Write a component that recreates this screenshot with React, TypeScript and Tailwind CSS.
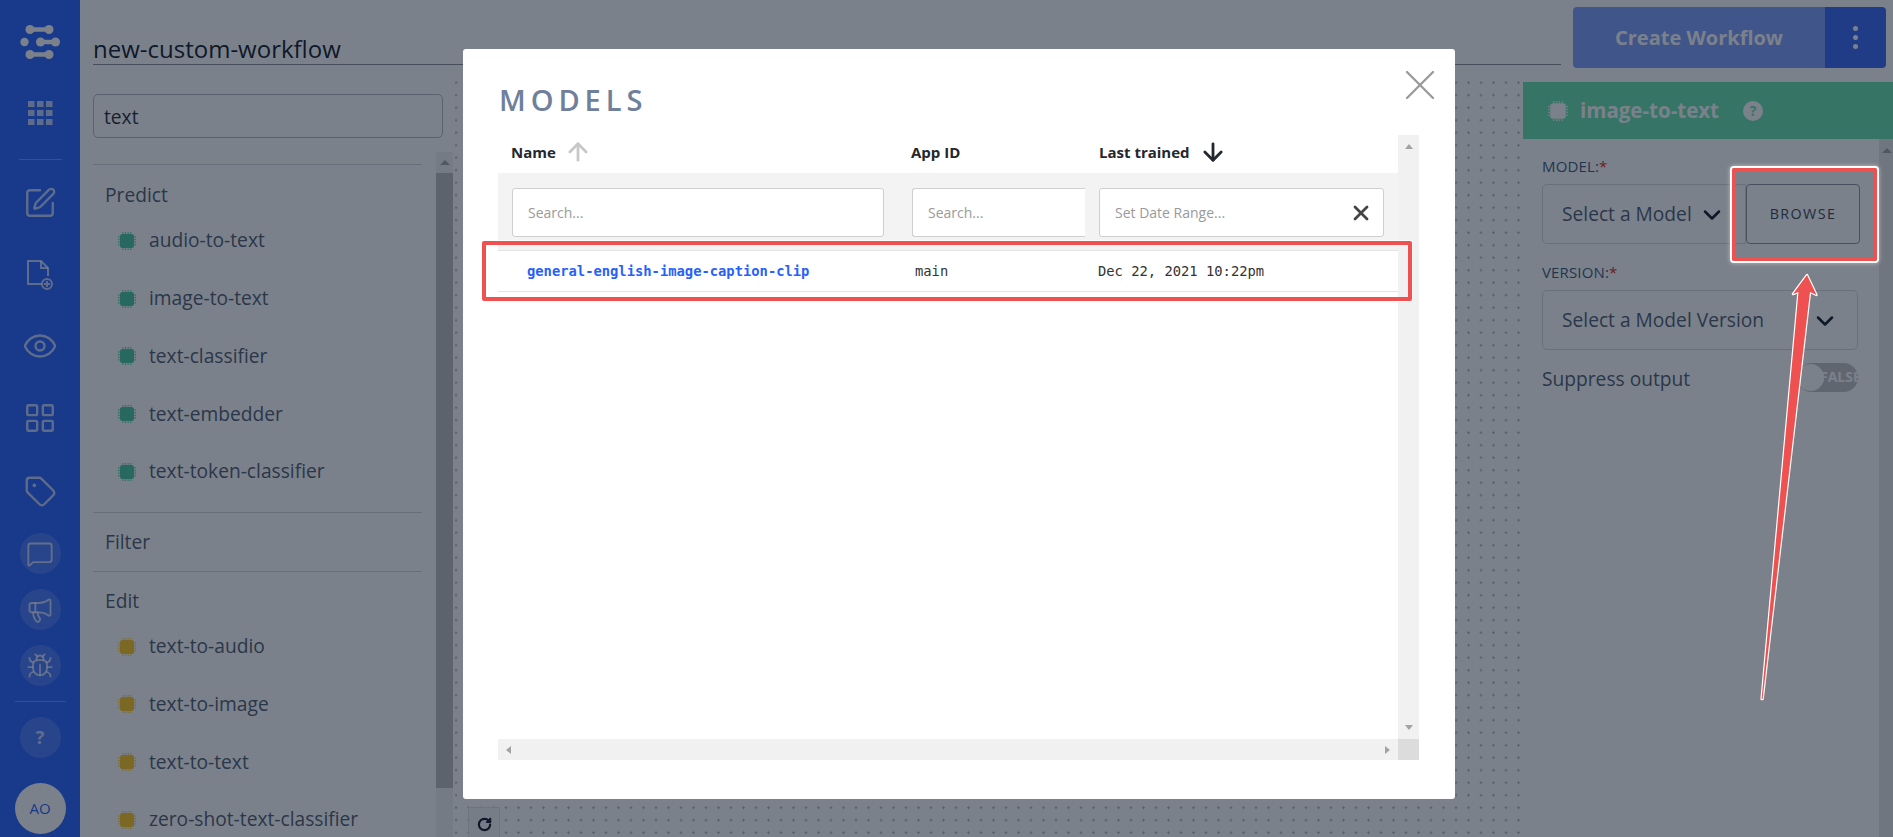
import { ArrowDown, ArrowUp, Bug, ChevronDown, Eye, LayoutGrid, Megaphone, MessageSquare, RotateCw, SquarePen, Tag, X } from 'lucide-react';

function Chip({ color, size = 18 }: { color: string; size?: number }) {
  const pins = [0, 1, 2, 3];
  return (
    <svg viewBox="0 0 18 18" width={size} height={size} className="shrink-0" fill={color}>
      <rect x="2" y="2" width="14" height="14" rx="2.5" />
      {pins.map((i) => (
        <g key={i} opacity="0.85">
          <rect x={4.4 + i * 2.6} y="0" width="1.2" height="1.6" />
          <rect x={4.4 + i * 2.6} y="16.4" width="1.2" height="1.6" />
          <rect x="0" y={4.4 + i * 2.6} width="1.6" height="1.2" />
          <rect x="16.4" y={4.4 + i * 2.6} width="1.6" height="1.2" />
        </g>
      ))}
    </svg>
  );
}

function Logo() {
  return (
    <svg viewBox="0 0 40 36" className="w-10 h-9 text-white" fill="currentColor" stroke="currentColor">
      <g strokeWidth="4.5">
        <line x1="10" y1="4.5" x2="29" y2="4.5" />
        <line x1="20.5" y1="17" x2="35.5" y2="17" />
        <line x1="10" y1="29.5" x2="29" y2="29.5" />
      </g>
      <g stroke="none">
        <circle cx="10" cy="4.5" r="4.5" />
        <circle cx="29" cy="4.5" r="4.5" />
        <circle cx="4.5" cy="17" r="4.2" />
        <circle cx="20.5" cy="17" r="4.5" />
        <circle cx="35.5" cy="17" r="4.5" />
        <circle cx="10" cy="29.5" r="4.5" />
        <circle cx="29" cy="29.5" r="4.5" />
      </g>
    </svg>
  );
}

function AppsIcon() {
  const cells = [0, 1, 2, 3, 4, 5, 6, 7, 8];
  return (
    <svg viewBox="0 0 25 24" className="w-[25px] h-6 text-white/70" fill="currentColor">
      {cells.map((i) => (
        <rect key={i} x={(i % 3) * 9} y={Math.floor(i / 3) * 9} width="6.5" height="6" />
      ))}
    </svg>
  );
}

function FilePlusIcon() {
  return (
    <svg viewBox="0 0 28 32" className="w-7 h-8 text-white/70" fill="none" stroke="currentColor" strokeWidth="2">
      <path d="M16 25H2V2h13l7 7v8" />
      <path d="M15 2v7h7" />
      <circle cx="21" cy="25" r="5" />
      <path d="M21 22v6M18 25h6" />
    </svg>
  );
}

function CircleBtn({ children }: { children: React.ReactNode }) {
  return <div className="w-[41px] h-[41px] rounded-full bg-white/15 flex items-center justify-center text-white/70">{children}</div>;
}

function Sidebar() {
  return (
    <aside className="w-20 shrink-0 bg-[#2761fd] flex flex-col items-center pt-[25px]">
      <Logo />
      <div className="mt-[40px]"><AppsIcon /></div>
      <div className="w-[43px] h-px bg-white/30 mt-[34px]" />
      <SquarePen className="w-[34px] h-[34px] text-white/70 mt-[26px]" strokeWidth={1.7} />
      <div className="mt-[39px]"><FilePlusIcon /></div>
      <Eye className="w-9 h-9 text-white/70 mt-[37px]" strokeWidth={1.6} />
      <LayoutGrid className="w-[34px] h-[34px] text-white/70 mt-[37px]" strokeWidth={1.7} />
      <Tag className="w-[33px] h-[33px] text-white/70 mt-[40px]" strokeWidth={1.7} />
      <div className="mt-[25px] flex flex-col gap-[15px]">
        <CircleBtn><MessageSquare className="w-7 h-7" strokeWidth={1.6} /></CircleBtn>
        <CircleBtn><Megaphone className="w-7 h-7" strokeWidth={1.6} /></CircleBtn>
        <CircleBtn><Bug className="w-7 h-7" strokeWidth={1.6} /></CircleBtn>
      </div>
      <div className="w-[51px] h-px bg-white/30 mt-[15px] shrink-0" />
      <div className="mt-[15px]">
        <CircleBtn><span className="text-[18px] font-bold">?</span></CircleBtn>
      </div>
      <div className="w-[51px] h-[51px] rounded-full bg-white mt-[25px] flex items-center justify-center text-[#2761fd] text-[15px] shrink-0">AO</div>
    </aside>
  );
}

function PaletteItem({ name, color }: { name: string; color: string }) {
  return (
    <div className="h-[57.75px] flex items-center pl-[25px] gap-[13px] text-[19.2px] text-[#4f5b6d]">
      <Chip color={color} />
      <span>{name}</span>
    </div>
  );
}

function Palette() {
  const predict = ['audio-to-text', 'image-to-text', 'text-classifier', 'text-embedder', 'text-token-classifier'];
  const edit = ['text-to-audio', 'text-to-image', 'text-to-text', 'zero-shot-text-classifier'];
  return (
    <div className="w-[375px] shrink-0 flex flex-col pt-[18px] min-h-0">
      <div className="ml-[13px] w-[350px] h-[44px] shrink-0 border border-[#b4b8bf] rounded-[5px] flex items-center px-[10px] pt-[2px] text-[19.2px] text-[#1f2937]">
        text
      </div>
      <div className="flex flex-1 min-h-0 mt-[14px] ml-[13px] overflow-hidden">
        <div className="w-[329px] shrink-0 pt-[12px]">
          <div className="border-t border-[#d5d8dc] pt-[17px] pb-[11px]">
            <h3 className="h-[26px] leading-[26px] pl-[12px] text-[19.2px] font-normal text-[#4f5b6d] mb-[4px]">Predict</h3>
            {predict.map((n) => <PaletteItem key={n} name={n} color="#45c7a0" />)}
          </div>
          <div className="border-t border-[#d5d8dc] pt-[16px] pb-[16px]">
            <h3 className="h-[26px] leading-[26px] pl-[12px] text-[19.2px] font-normal text-[#4f5b6d]">Filter</h3>
          </div>
          <div className="border-t border-[#d5d8dc] pt-[16px]">
            <h3 className="h-[26px] leading-[26px] pl-[12px] text-[19.2px] font-normal text-[#4f5b6d] mb-[4px]">Edit</h3>
            {edit.map((n) => <PaletteItem key={n} name={n} color="#ffc81e" />)}
          </div>
        </div>
        <div className="ml-[14px] w-[17px] shrink-0 bg-[#f1f1f1] flex flex-col items-center">
          <div className="h-[21px] shrink-0 flex items-center justify-center">
            <div className="w-0 h-0 border-x-[5px] border-x-transparent border-b-[5px] border-b-[#a3a3a3]" />
          </div>
          <div className="w-full h-[615px] bg-[#bdbdbd]" />
        </div>
      </div>
    </div>
  );
}

function Canvas() {
  return (
    <div className="flex-1 min-w-0 relative bg-white bg-[radial-gradient(circle,#b4b8be_1px,transparent_1.3px)] bg-[length:12.5px_12.5px] bg-[position:-5.25px_0.45px]">
      <div className="absolute left-[13px] top-[731px] w-[32px] h-[40px] bg-[#f4f5f6] border-l border-t border-r border-[#e0e2e5] flex items-start justify-center pt-[9px]">
        <RotateCw className="w-[15px] h-[15px] text-[#111827]" strokeWidth={3.5} />
      </div>
    </div>
  );
}

function Field({ label, children }: { label: string; children: React.ReactNode }) {
  return (
    <div>
      <div className="text-[15px] leading-[20px] text-[#39587a] uppercase tracking-[0.01em]">
        {label}:<span className="text-[#e02020]">*</span>
      </div>
      {children}
    </div>
  );
}

function SidePanel() {
  return (
    <div className="w-[370px] shrink-0 mt-[6px] flex flex-col bg-white">
      <div className="h-[57px] shrink-0 bg-[#66e4ad] flex items-center pl-[25px] text-white">
        <Chip color="#ffffff" size={20} />
        <span className="ml-[12px] text-[20.5px] font-bold">image-to-text</span>
        <span className="ml-[24px] w-5 h-5 rounded-full bg-white text-[#66e4ad] flex items-center justify-center text-[14px] font-bold">?</span>
      </div>
      <div className="flex flex-1 min-h-0">
        <div className="flex-1 pl-[19px] pt-[17px] pr-[19px] text-[#4f5b6d]">
          <Field label="Model">
            <div className="flex mt-[8px] h-[60px]">
              <div className="w-[204px] border border-[#d8dade] rounded-l-[5px] flex items-center pl-[19px] pt-[1px] gap-[6px] text-[19.2px]">
                Select a Model
                <ChevronDown className="w-7 h-7 text-[#111827]" strokeWidth={2.2} />
              </div>
              <div className="w-[114px] border border-[#8f939a] rounded-[4px] flex items-center justify-center text-[14.3px] tracking-[0.1em] text-[#374151]">
                BROWSE
              </div>
            </div>
          </Field>
          <div className="mt-[18px]">
            <Field label="Version">
              <div className="flex items-center justify-between mt-[8px] h-[60px] w-[316px] border border-[#d8dade] rounded-[5px] pl-[19px] pt-[1px] pr-[18px] text-[19.2px]">
                Select a Model Version
                <ChevronDown className="w-7 h-7 text-[#111827]" strokeWidth={2.2} />
              </div>
            </Field>
          </div>
          <div className="flex items-start justify-between w-[316px] mt-[13px] text-[19.2px]">
            <span className="mt-[2px]">Suppress output</span>
            <div className="w-[61px] h-[29px] rounded-full bg-[#c4c4c4] relative overflow-hidden">
              <div className="absolute left-0 top-[1px] w-[27px] h-[27px] rounded-full bg-white" />
              <span className="absolute left-[23px] top-[3px] text-[14px] font-bold text-white">FALSE</span>
            </div>
          </div>
        </div>
        <div className="w-[16px] shrink-0 bg-[#e6e6e6] flex justify-center pt-[9px]">
          <div className="w-0 h-0 border-x-[5px] border-x-transparent border-b-[5px] border-b-[#a3a3a3]" />
        </div>
      </div>
    </div>
  );
}

function FilterInput({ placeholder, className = '', children }: { placeholder: string; className?: string; children?: React.ReactNode }) {
  return (
    <div className={`h-[49px] border border-[#cfcfcf] bg-white flex items-center justify-between text-[14px] text-[#9a9a9a] ${className}`}>
      {placeholder}
      {children}
    </div>
  );
}

function ModelsModal() {
  return (
    <div className="absolute left-[463px] top-[49px] w-[992px] h-[750px] bg-white rounded-[3px] pl-[35px] flex flex-col">
      <div className="h-[86px] shrink-0 pt-[31px] pl-[1px] text-[29px] leading-[40px] font-semibold tracking-[0.17em] text-[#70809b]">MODELS</div>
      <X className="absolute left-[931px] top-[10px] w-[52px] h-[52px] text-[#9a9a9a]" strokeWidth={1.1} />
      <div className="w-[921px] h-[625px] flex flex-col">
        <div className="flex flex-1 min-h-0">
          <div className="w-[900px] shrink-0">
            <div className="grid grid-cols-[400px_187px_313px] h-[38px] items-center pb-[4px] text-[15px] font-bold text-[#23272e]">
              <div className="pl-[13px] flex items-center gap-[8px]">Name <ArrowUp className="w-7 h-7 text-[#c8c8c8] -my-2" strokeWidth={2.4} /></div>
              <div className="pl-[13px]">App ID</div>
              <div className="pl-[14px] flex items-center gap-[9px]">Last trained <ArrowDown className="w-7 h-7 text-[#23272e] -my-2" strokeWidth={2.4} /></div>
            </div>
            <div className="grid grid-cols-[400px_187px_313px] h-[77px] bg-[#f3f3f3] pt-[15px]">
              <div className="px-[14px]"><FilterInput placeholder="Search..." className="rounded-[3px] pl-[15px]" /></div>
              <div className="pl-[14px] pr-0"><FilterInput placeholder="Search..." className="rounded-l-[3px] border-r-0 pl-[15px]" /></div>
              <div className="px-[14px]">
                <FilterInput placeholder="Set Date Range..." className="rounded-[3px] pl-[15px]">
                  <X className="w-6 h-6 text-[#444] mr-[10px]" strokeWidth={2.8} />
                </FilterInput>
              </div>
            </div>
            <div className="grid grid-cols-[400px_187px_313px] h-[42px] items-center border-y border-[#e3e3e3] font-['DejaVu_Sans_Mono',monospace] text-[13.8px] text-[#333]">
              <div className="pl-[29px] font-bold text-[#2761fd]">general-english-image-caption-clip</div>
              <div className="pl-[17px]">main</div>
              <div className="pl-[13px]">Dec 22, 2021 10:22pm</div>
            </div>
          </div>
          <div className="w-[21px] shrink-0 bg-[#f1f1f1] flex flex-col items-center justify-between py-[9px]">
            <div className="w-0 h-0 border-x-[4px] border-x-transparent border-b-[5px] border-b-[#a3a3a3]" />
            <div className="w-0 h-0 border-x-[4px] border-x-transparent border-t-[5px] border-t-[#a3a3a3]" />
          </div>
        </div>
        <div className="h-[21px] shrink-0 flex">
          <div className="w-[900px] bg-[#f1f1f1] flex items-center justify-between px-[8px]">
            <div className="w-0 h-0 border-y-[4px] border-y-transparent border-r-[5px] border-r-[#a3a3a3]" />
            <div className="w-0 h-0 border-y-[4px] border-y-transparent border-l-[5px] border-l-[#a3a3a3]" />
          </div>
          <div className="w-[21px] bg-[#dcdcdc]" />
        </div>
      </div>
    </div>
  );
}

function Annotations() {
  return (
    <>
      <div className="absolute left-[482px] top-[241px] w-[930px] h-[60px] border-[4px] border-[#ef5050] rounded-[2px] shadow-[0_0_0_1px_rgba(255,255,255,0.7)]" />
      <div className="absolute left-[1732px] top-[168px] w-[145px] h-[93px] border-[4px] border-[#ef5050] rounded-[2px] shadow-[0_0_0_2px_#fff,0_0_4px_2px_rgba(255,255,255,0.5)]" />
      <svg className="absolute left-[1740px] top-[260px] w-[90px] h-[450px]" viewBox="1740 260 90 450">
        <polygon
          points="1807,275 1816.5,295 1810,292 1762.6,699 1761.6,699 1798.5,292 1793,294"
          fill="#ef5050"
          stroke="#fff"
          strokeWidth="2.4"
          strokeLinejoin="round"
          paintOrder="stroke"
        />
      </svg>
    </>
  );
}

export default function App() {
  return (
    <div className="relative w-[1893px] h-[837px] overflow-hidden flex bg-white font-['Open_Sans',sans-serif]">
      <Sidebar />
      <div className="flex-1 min-w-0 flex flex-col">
        <header className="h-[76px] shrink-0 flex items-start gap-[12px] pl-[13px] pr-[7px] pt-[7px]">
          <div className="flex-1 h-[58px] border-b border-[#8a8f96] flex items-end text-[24px] leading-[30px] text-[#111827]">new-custom-workflow</div>
          <div className="flex h-[61px] w-[313px] rounded-[4px] overflow-hidden text-white">
            <div className="w-[252px] bg-[#7c9dfd] flex items-center justify-center text-[20px] font-bold">Create Workflow</div>
            <div className="flex-1 bg-[#3566f6] flex flex-col items-center justify-center gap-[4px]">
              <span className="w-[5px] h-[5px] rounded-full bg-white" />
              <span className="w-[5px] h-[5px] rounded-full bg-white" />
              <span className="w-[5px] h-[5px] rounded-full bg-white" />
            </div>
          </div>
        </header>
        <div className="flex flex-1 min-h-0">
          <Palette />
          <Canvas />
          <SidePanel />
        </div>
      </div>
      <div className="absolute inset-0 bg-[#0f1a2c]/55" />
      <ModelsModal />
      <Annotations />
    </div>
  );
}
